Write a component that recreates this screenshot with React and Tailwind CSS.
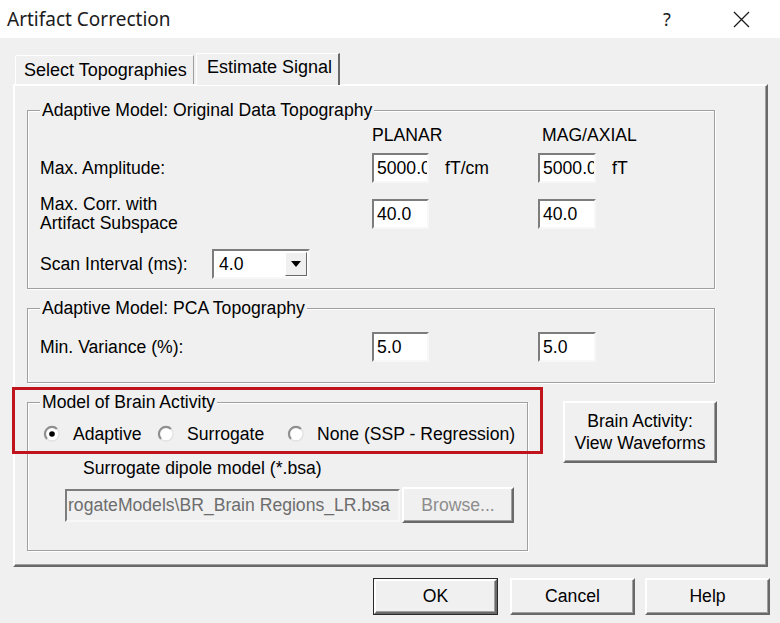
const raised =
  'border-2 border-t-white border-l-white border-r-[#696969] border-b-[#696969] shadow-[inset_-1px_-1px_0_#a0a0a0] bg-[#f0f0f0]';
const sunken = 'border-2 border-t-[#7d7d7d] border-l-[#7d7d7d] border-r-[#f7f7f7] border-b-[#f7f7f7]';

function TextBox({ value, className = '' }) {
  return (
    <div className={`${sunken} flex h-[30px] items-center overflow-hidden whitespace-nowrap bg-white pl-[3px] ${className}`}>
      {value}
    </div>
  );
}

function Radio({ checked }) {
  return (
    <svg width="18" height="18" viewBox="0 0 18 18" className="shrink-0">
      <circle cx="9" cy="9" r="7" fill="#fff" />
      <path d="M4 14 A7 7 0 0 1 14 4" fill="none" stroke="#8f8f8f" strokeWidth="2.2" />
      <path d="M14 4 A7 7 0 0 1 4 14" fill="none" stroke="#e2e2e2" strokeWidth="1.4" />
      {checked ? <circle cx="9" cy="9" r="2.8" fill="#000" /> : null}
    </svg>
  );
}

function Group({ title, className = '', children }) {
  return (
    <fieldset
      className={`border border-[#a0a0a0] shadow-[inset_1px_1px_0_#fff,1px_1px_0_#fff] ${className}`}
    >
      <legend className="ml-[12px] h-[18px] bg-[#f0f0f0] px-[2px] leading-[18px]">{title}</legend>
      {children}
    </fieldset>
  );
}

function TitleBar() {
  return (
    <div className="flex h-[38px] items-center bg-white pl-[7px] font-['Noto_Sans','Liberation_Sans',sans-serif] text-[#1b1b1b]">
      <span className="text-[19px] leading-none">Artifact Correction</span>
      <div className="ml-auto flex items-center pr-[16px]">
        <div className="mr-[28px] flex w-[46px] justify-center text-[18px]">?</div>
        <div className="flex w-[46px] justify-center">
          <svg width="17" height="17" viewBox="0 0 17 17">
            <path d="M1 1 L16 16 M16 1 L1 16" stroke="#1b1b1b" strokeWidth="1.3" />
          </svg>
        </div>
      </div>
    </div>
  );
}

export default function App() {
  return (
    <div className="h-[623px] w-[780px] overflow-hidden bg-[#f0f0f0] font-['Liberation_Sans',Arial,sans-serif] text-[17.6px] text-black">
      <TitleBar />

      <div className="pl-[13px] pt-[15px]">
        <div className="flex h-[31px] items-end pl-[2px] text-[18px]">
          <div className="flex h-[29px] w-[179px] items-center rounded-tl-[2px] border-l border-t border-white border-r border-r-[#a0a0a0] pl-[8px]">
            Select Topographies
          </div>
          <div className="relative z-10 -mb-px ml-[2px] flex h-[32px] w-[144px] items-center border-l border-t border-white border-r-2 border-r-[#696969] bg-[#f0f0f0] pb-[4px] pl-[10px]">
            Estimate Signal
          </div>
        </div>

        <div className="relative h-[483px] w-[755px] border-2 border-t-white border-l-white border-r-[#696969] border-b-[#696969] shadow-[inset_-1px_-1px_0_#a0a0a0]">
          <div className="pl-[12px] pt-[15px]">
            <Group title="Adaptive Model: Original Data Topography" className="h-[188px] w-[688px]">
              <div className="pl-[12px]">
                <div className="mt-[7px] flex h-[18px] items-center">
                  <span className="w-[332px]" />
                  <span className="w-[170px]">PLANAR</span>
                  <span>MAG/AXIAL</span>
                </div>
                <div className="mt-[9px] flex h-[30px] items-center">
                  <span className="w-[332px]">Max. Amplitude:</span>
                  <TextBox value="5000.0" className="w-[57px]" />
                  <span className="ml-[16px] w-[93px]">fT/cm</span>
                  <TextBox value="5000.0" className="w-[58px]" />
                  <span className="ml-[16px]">fT</span>
                </div>
                <div className="mt-[12px] flex h-[38px] items-center">
                  <span className="w-[332px] leading-[19px]">
                    Max. Corr. with
                    <br />
                    Artifact Subspace
                  </span>
                  <TextBox value="40.0" className="w-[57px]" />
                  <span className="w-[109px]" />
                  <TextBox value="40.0" className="w-[58px]" />
                </div>
                <div className="mt-[16px] flex h-[30px] items-center">
                  <span className="w-[172px]">Scan Interval (ms):</span>
                  <div className={`${sunken} flex h-[30px] w-[98px] items-center bg-white pl-[5px]`}>
                    <span className="flex-1">4.0</span>
                    <div className="m-[1px] flex h-[24px] w-[22px] items-center justify-center border border-t-white border-l-white border-r-[#696969] border-b-[#696969] bg-[#f0f0f0]">
                      <svg width="10" height="6" viewBox="0 0 10 6">
                        <path d="M0 0 H10 L5 6 Z" fill="#000" />
                      </svg>
                    </div>
                  </div>
                </div>
              </div>
            </Group>

            <Group title="Adaptive Model: PCA Topography" className="mt-[10px] h-[84px] w-[688px]">
              <div className="mt-[15px] flex h-[30px] items-center pl-[12px]">
                <span className="w-[332px]">Min. Variance (%):</span>
                <TextBox value="5.0" className="w-[57px]" />
                <span className="w-[109px]" />
                <TextBox value="5.0" className="w-[58px]" />
              </div>
            </Group>

            <div className="mt-[10px] flex items-start">
              <Group title="Model of Brain Activity" className="h-[158px] w-[501px]">
                <div className="mt-[13px] flex h-[20px] items-center pl-[15px]">
                  <div className="flex w-[114px] items-center">
                    <Radio checked />
                    <span className="ml-[12px]">Adaptive</span>
                  </div>
                  <div className="flex w-[130px] items-center">
                    <Radio />
                    <span className="ml-[12px]">Surrogate</span>
                  </div>
                  <div className="flex items-center">
                    <Radio />
                    <span className="ml-[12px] whitespace-nowrap">None (SSP - Regression)</span>
                  </div>
                </div>
                <div className="mt-[14px] pl-[55px] leading-[20px]">Surrogate dipole model (*.bsa)</div>
                <div className="mt-[9px] flex items-center pl-[37px]">
                  <div className={`${sunken} flex h-[33px] w-[335px] items-center overflow-hidden whitespace-nowrap pl-[1px] text-[#6d6d6d]`}>
                    rogateModels\BR_Brain Regions_LR.bsa
                  </div>
                  <div className={`${raised} ml-[2px] flex h-[36px] w-[112px] items-center justify-center text-[#8d8d8d]`}>
                    Browse...
                  </div>
                </div>
              </Group>

              <div className={`${raised} ml-[35px] mt-[8px] flex h-[62px] w-[154px] flex-col items-center justify-center leading-[22px]`}>
                <span>Brain Activity:</span>
                <span>View Waveforms</span>
              </div>
            </div>
          </div>

          <div className="pointer-events-none absolute left-[-3px] top-[301px] h-[67px] w-[531px] border-[3px] border-[#c0141c]" />
        </div>
      </div>

      <div className="mt-[11px] flex justify-end pr-[10px]">
        <div className="border border-[#2a2a2a]">
          <div className={`${raised} flex h-[35px] w-[123px] items-center justify-center`}>OK</div>
        </div>
        <div className={`${raised} ml-[12px] flex h-[37px] w-[125px] items-center justify-center`}>Cancel</div>
        <div className={`${raised} ml-[10px] flex h-[37px] w-[125px] items-center justify-center`}>Help</div>
      </div>
    </div>
  );
}
